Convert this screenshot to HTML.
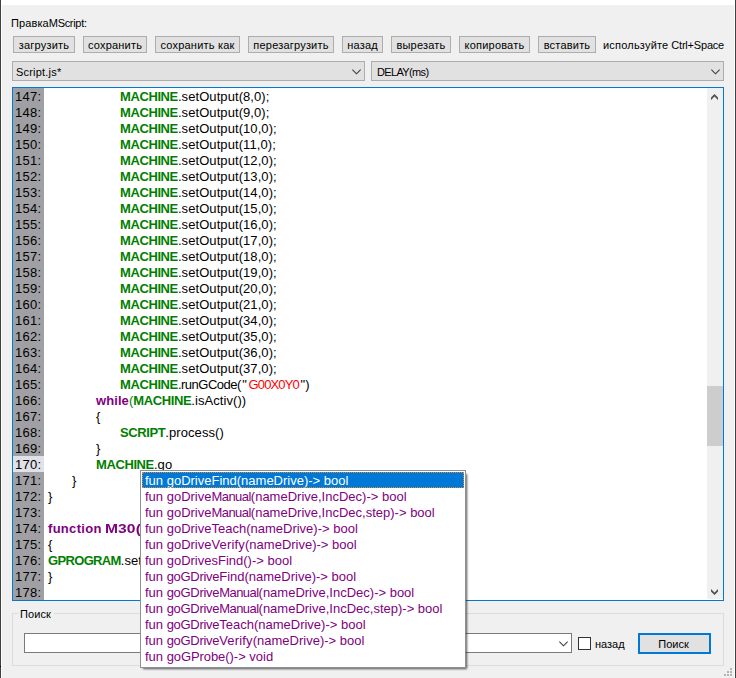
<!DOCTYPE html>
<html lang="ru"><head><meta charset="utf-8"><title>ПравкаMScript</title>
<style>
*{box-sizing:border-box}
html,body{margin:0;padding:0;width:736px;height:678px;overflow:hidden;background:#fff}
body{position:relative;font-family:"Liberation Sans","DejaVu Sans",sans-serif;font-size:11px;color:#000}
#win{position:absolute;left:2px;top:5px;width:732px;height:673px;background:#f0f0f0}
.edgeL{position:absolute;left:0;top:0;width:1px;height:678px;background:#404040}
.edgeR{position:absolute;left:735px;top:0;width:1px;height:678px;background:#404040}
.tick{position:absolute;left:0;top:666px;width:1px;height:1px;background:#000}
.lbl{position:absolute;white-space:nowrap;line-height:13px;height:13px}
.btn{position:absolute;top:36px;height:17px;background:#e1e1e1;border:1px solid #adadad;text-align:center;line-height:16px;white-space:nowrap;letter-spacing:.2px}
.combo{position:absolute;top:61px;height:20px;background:#e1e1e1;border:1px solid #adadad;line-height:20px;padding-left:3px;white-space:nowrap}
.combo svg{position:absolute;right:3px;top:7px}
#ed{position:absolute;left:12px;top:87px;width:712px;height:514px;border:1px solid #0078d7;background:#fff;overflow:hidden;font-size:13px}
#gut{position:absolute;left:0;top:0;width:31px;height:512px;background:#a0a0a4}
.ln{position:absolute;left:0;width:695px;height:16px;line-height:16px;white-space:nowrap}
#curl{position:absolute;left:0;top:368px;width:31px;height:16px;background:#e1e1e8}
.no{position:absolute;left:0;top:0;width:31px;height:16px;padding-left:2px;letter-spacing:.3px}
.tx{position:absolute;top:0;letter-spacing:.08px}
b.g{color:#008000;letter-spacing:-0.4px}
b.k{color:#800080}
.s{color:#ff0000;letter-spacing:-.85px;margin-left:1.5px}
.q{margin-left:1.5px}
#sb{position:absolute;left:694px;top:0;width:16px;height:511px;background:#f0f0f0}
#th{position:absolute;left:0;top:298px;width:16px;height:60px;background:#cdcdcd}
#pop{position:absolute;left:140px;top:470px;width:326px;height:198px;background:#fff;border:1px solid #8c9098;padding:1px;font-size:13px;color:#800080}
#shd{position:absolute;left:143px;top:474px;width:324px;height:195px;background:rgba(0,0,0,.65);filter:blur(1px)}
.it{height:16px;line-height:18px;overflow:hidden;padding-left:3px;white-space:nowrap}
.it.sel{background:#0078d7;color:#fff;outline:1px dotted #d98a2e;outline-offset:-1px}
#grp{position:absolute;left:12px;top:613px;width:712px;height:53px;border:1px solid #dcdcdc}
#grpl{position:absolute;left:18px;top:608px;background:#f0f0f0;padding:0 3px 0 2px;line-height:13px;letter-spacing:.1px}
#srch{position:absolute;left:24px;top:633px;width:548px;height:20px;background:#fff;border:1px solid #7a7a7a}
#srch svg{position:absolute;right:3px;top:7px}
#chk{position:absolute;left:578px;top:637px;width:13px;height:13px;background:#fff;border:1px solid #333}
#find{position:absolute;left:638px;top:633px;width:73px;height:21px;background:#e1e1e1;border:2px solid #0078d7;text-align:center;line-height:19px;padding-right:2px}
.dot{position:absolute;width:2px;height:2px;background:#b4b4b4}
</style></head><body>
<div id="win"></div>
<div class="edgeL"></div><div class="edgeR"></div><div class="tick"></div>
<div class="lbl" style="left:11px;top:17px"><span style="letter-spacing:.1px">Правка</span><span style="letter-spacing:-.3px">MScript:</span></div>
<div class="btn" style="left:13px;width:62px">загрузить</div>
<div class="btn" style="left:83px;width:64px">сохранить</div>
<div class="btn" style="left:155px;width:85px">сохранить как</div>
<div class="btn" style="left:248px;width:86px">перезагрузить</div>
<div class="btn" style="left:342px;width:41px">назад</div>
<div class="btn" style="left:391px;width:60px">вырезать</div>
<div class="btn" style="left:459px;width:71px">копировать</div>
<div class="btn" style="left:538px;width:58px">вставить</div>
<div class="lbl" style="left:603px;top:39px"><span style="letter-spacing:.2px">используйте</span><span style="letter-spacing:-.2px"> Ctrl+Space</span></div>
<div class="combo" style="left:12px;width:353px"><span style="letter-spacing:.2px">Script.js*</span><svg width="9" height="6" viewBox="0 0 9 6"><path d="M0.3 0.6 L4.5 4.8 L8.7 0.6" fill="none" stroke="#3c3c3c" stroke-width="1.15"/></svg></div>
<div class="combo" style="left:371px;width:353px;padding-left:5px"><span style="letter-spacing:-.65px">DELAY(ms)</span><svg width="9" height="6" viewBox="0 0 9 6"><path d="M0.3 0.6 L4.5 4.8 L8.7 0.6" fill="none" stroke="#3c3c3c" stroke-width="1.15"/></svg></div>
<div id="ed">
<div id="gut"></div><div id="curl"></div>
<div class="ln" style="top:1px"><span class="no">147:</span><span class="tx" style="left:107px"><b class="g">MACHINE</b>.setOutput(8,0);</span></div>
<div class="ln" style="top:17px"><span class="no">148:</span><span class="tx" style="left:107px"><b class="g">MACHINE</b>.setOutput(9,0);</span></div>
<div class="ln" style="top:33px"><span class="no">149:</span><span class="tx" style="left:107px"><b class="g">MACHINE</b>.setOutput(10,0);</span></div>
<div class="ln" style="top:49px"><span class="no">150:</span><span class="tx" style="left:107px"><b class="g">MACHINE</b>.setOutput(11,0);</span></div>
<div class="ln" style="top:65px"><span class="no">151:</span><span class="tx" style="left:107px"><b class="g">MACHINE</b>.setOutput(12,0);</span></div>
<div class="ln" style="top:81px"><span class="no">152:</span><span class="tx" style="left:107px"><b class="g">MACHINE</b>.setOutput(13,0);</span></div>
<div class="ln" style="top:97px"><span class="no">153:</span><span class="tx" style="left:107px"><b class="g">MACHINE</b>.setOutput(14,0);</span></div>
<div class="ln" style="top:113px"><span class="no">154:</span><span class="tx" style="left:107px"><b class="g">MACHINE</b>.setOutput(15,0);</span></div>
<div class="ln" style="top:129px"><span class="no">155:</span><span class="tx" style="left:107px"><b class="g">MACHINE</b>.setOutput(16,0);</span></div>
<div class="ln" style="top:145px"><span class="no">156:</span><span class="tx" style="left:107px"><b class="g">MACHINE</b>.setOutput(17,0);</span></div>
<div class="ln" style="top:161px"><span class="no">157:</span><span class="tx" style="left:107px"><b class="g">MACHINE</b>.setOutput(18,0);</span></div>
<div class="ln" style="top:177px"><span class="no">158:</span><span class="tx" style="left:107px"><b class="g">MACHINE</b>.setOutput(19,0);</span></div>
<div class="ln" style="top:193px"><span class="no">159:</span><span class="tx" style="left:107px"><b class="g">MACHINE</b>.setOutput(20,0);</span></div>
<div class="ln" style="top:209px"><span class="no">160:</span><span class="tx" style="left:107px"><b class="g">MACHINE</b>.setOutput(21,0);</span></div>
<div class="ln" style="top:225px"><span class="no">161:</span><span class="tx" style="left:107px"><b class="g">MACHINE</b>.setOutput(34,0);</span></div>
<div class="ln" style="top:241px"><span class="no">162:</span><span class="tx" style="left:107px"><b class="g">MACHINE</b>.setOutput(35,0);</span></div>
<div class="ln" style="top:257px"><span class="no">163:</span><span class="tx" style="left:107px"><b class="g">MACHINE</b>.setOutput(36,0);</span></div>
<div class="ln" style="top:273px"><span class="no">164:</span><span class="tx" style="left:107px"><b class="g">MACHINE</b>.setOutput(37,0);</span></div>
<div class="ln" style="top:289px"><span class="no">165:</span><span class="tx" style="left:107px"><b class="g">MACHINE</b><span style="letter-spacing:-.5px">.runGCode(</span><span class="q">"</span><span class="s">G00X0Y0</span><span class="q">"</span>)</span></div>
<div class="ln" style="top:305px"><span class="no">166:</span><span class="tx" style="left:83px"><b class="k">while</b><span style="color:#008000">(</span><b class="g">MACHINE</b>.isActiv())</span></div>
<div class="ln" style="top:321px"><span class="no">167:</span><span class="tx" style="left:83px">{</span></div>
<div class="ln" style="top:337px"><span class="no">168:</span><span class="tx" style="left:107px"><b class="g">SCRIPT</b>.process()</span></div>
<div class="ln" style="top:353px"><span class="no">169:</span><span class="tx" style="left:83px">}</span></div>
<div class="ln" style="top:369px"><span class="no">170:</span><span class="tx" style="left:83px"><b class="g">MACHINE</b>.go</span></div>
<div class="ln" style="top:385px"><span class="no">171:</span><span class="tx" style="left:59px">}</span></div>
<div class="ln" style="top:401px"><span class="no">172:</span><span class="tx" style="left:35px">}</span></div>
<div class="ln" style="top:417px"><span class="no">173:</span><span class="tx" style="left:35px"></span></div>
<div class="ln" style="top:433px"><span class="no">174:</span><span class="tx" style="left:35px"><b class="k" style="letter-spacing:.3px">function</b><b class="k"> </b><b class="k" style="display:inline-block;transform:scaleX(1.2);transform-origin:0 50%;margin-left:-.7px">M30()</b></span></div>
<div class="ln" style="top:449px"><span class="no">175:</span><span class="tx" style="left:35px">{</span></div>
<div class="ln" style="top:465px"><span class="no">176:</span><span class="tx" style="left:35px"><b class="g" style="letter-spacing:-.66px">GPROGRAM</b>.setActiv(0);</span></div>
<div class="ln" style="top:481px"><span class="no">177:</span><span class="tx" style="left:35px">}</span></div>
<div class="ln" style="top:497px"><span class="no">178:</span><span class="tx" style="left:35px"></span></div>
<div id="sb"><div id="th"></div>
<svg style="position:absolute;left:3px;top:4px" width="10" height="10" viewBox="0 0 10 10"><path d="M1 5.5 L4.5 2 L8 5.5 L8 8 L4.5 4.5 L1 8 Z" fill="#505050"/></svg>
<svg style="position:absolute;left:3px;top:498px" width="10" height="10" viewBox="0 0 10 10"><path d="M1 3 L4.5 6.5 L8 3 L8 5.5 L4.5 9 L1 5.5 Z" fill="#505050"/></svg>
</div>
</div>
<div id="grp"></div><div id="grpl">Поиск</div>
<div id="srch"><svg width="9" height="6" viewBox="0 0 9 6"><path d="M0.3 0.6 L4.5 4.8 L8.7 0.6" fill="none" stroke="#3c3c3c" stroke-width="1.15"/></svg></div>
<div id="chk"></div>
<div class="lbl" style="left:595px;top:638px">назад</div>
<div id="find">Поиск</div>
<div id="shd"></div>
<div id="pop">
<div class="it sel">fun goDriveFind(nameDrive)-&gt; bool</div>
<div class="it">fun goDrive<span style="letter-spacing:-.55px">Manual</span>(nameDrive,IncDec)-&gt; bool</div>
<div class="it">fun goDrive<span style="letter-spacing:-.55px">Manual</span>(nameDrive,IncDec,step)-&gt; bool</div>
<div class="it">fun goDriveTeach(nameDrive)-&gt; bool</div>
<div class="it">fun goDrive<span style="letter-spacing:.17px">Verify</span>(nameDrive)-&gt; bool</div>
<div class="it">fun goDrivesFind()-&gt; bool</div>
<div class="it">fun <span style="letter-spacing:-.3px">goGDrive</span>Find(nameDrive)-&gt; bool</div>
<div class="it">fun <span style="letter-spacing:-.3px">goGDrive</span><span style="letter-spacing:-.55px">Manual</span>(nameDrive,IncDec)-&gt; bool</div>
<div class="it">fun <span style="letter-spacing:-.3px">goGDrive</span><span style="letter-spacing:-.55px">Manual</span>(nameDrive,IncDec,step)-&gt; bool</div>
<div class="it">fun <span style="letter-spacing:-.3px">goGDrive</span>Teach(nameDrive)-&gt; bool</div>
<div class="it">fun <span style="letter-spacing:-.3px">goGDrive</span><span style="letter-spacing:.17px">Verify</span>(nameDrive)-&gt; bool</div>
<div class="it">fun <span style="letter-spacing:-.1px">goGProbe</span>()-&gt; void</div>
</div>
<div class="dot" style="left:730px;top:668px"></div>
<div class="dot" style="left:727px;top:671px"></div><div class="dot" style="left:730px;top:671px"></div>
<div class="dot" style="left:724px;top:674px"></div><div class="dot" style="left:727px;top:674px"></div><div class="dot" style="left:730px;top:674px"></div>
</body></html>
